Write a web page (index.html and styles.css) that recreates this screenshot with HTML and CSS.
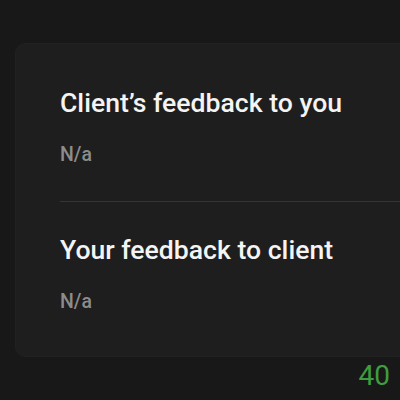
FILE: index.html
```html
<!DOCTYPE html>
<html>
<head>
<meta charset="utf-8">
<link rel="stylesheet" href="styles.css">
</head>
<body>
<div class="page">
  <section class="card">
    <div class="block">
      <h2 class="title">Client’s feedback to you</h2>
      <p class="value">N/a</p>
    </div>
    <div class="divider"></div>
    <div class="block">
      <h2 class="title">Your feedback to client</h2>
      <p class="value">N/a</p>
    </div>
  </section>
  <div class="counter">40</div>
</div>
</body>
</html>
```

FILE: styles.css
```css
html, body {
  margin: 0;
  padding: 0;
  background: #181818;
  width: 400px;
  height: 400px;
  overflow: hidden;
}
.page {
  padding: 44px 0 0 16px;
  font-family: Roboto, "Liberation Sans", Arial, sans-serif;
}
.card {
  background: #1e1e1e;
  border-radius: 9px 0 0 9px;
  box-shadow: -1px 0 0 0 #212121, 0 -1px 0 0 #212121, 0 1px 0 0 #212121;
  padding: 43px 0 43px 44px;
}
.block {
  display: flex;
  flex-direction: column;
  gap: 24px;
}
.title {
  margin: 0;
  font-size: 26.6px;
  line-height: 32px;
  font-weight: 500;
  color: #f4f4f4;
}
.value {
  margin: 0;
  font-size: 19.5px;
  line-height: 23px;
  font-weight: 500;
  color: #8c8c8c;
}
.divider {
  height: 1px;
  background: #353535;
  margin: 35px 0 32px 0;
}
.counter {
  text-align: right;
  padding-right: 10px;
  margin-top: 4px;
  font-size: 28px;
  line-height: 32px;
  color: #3f9c3f;
  font-weight: 400;
}
```
